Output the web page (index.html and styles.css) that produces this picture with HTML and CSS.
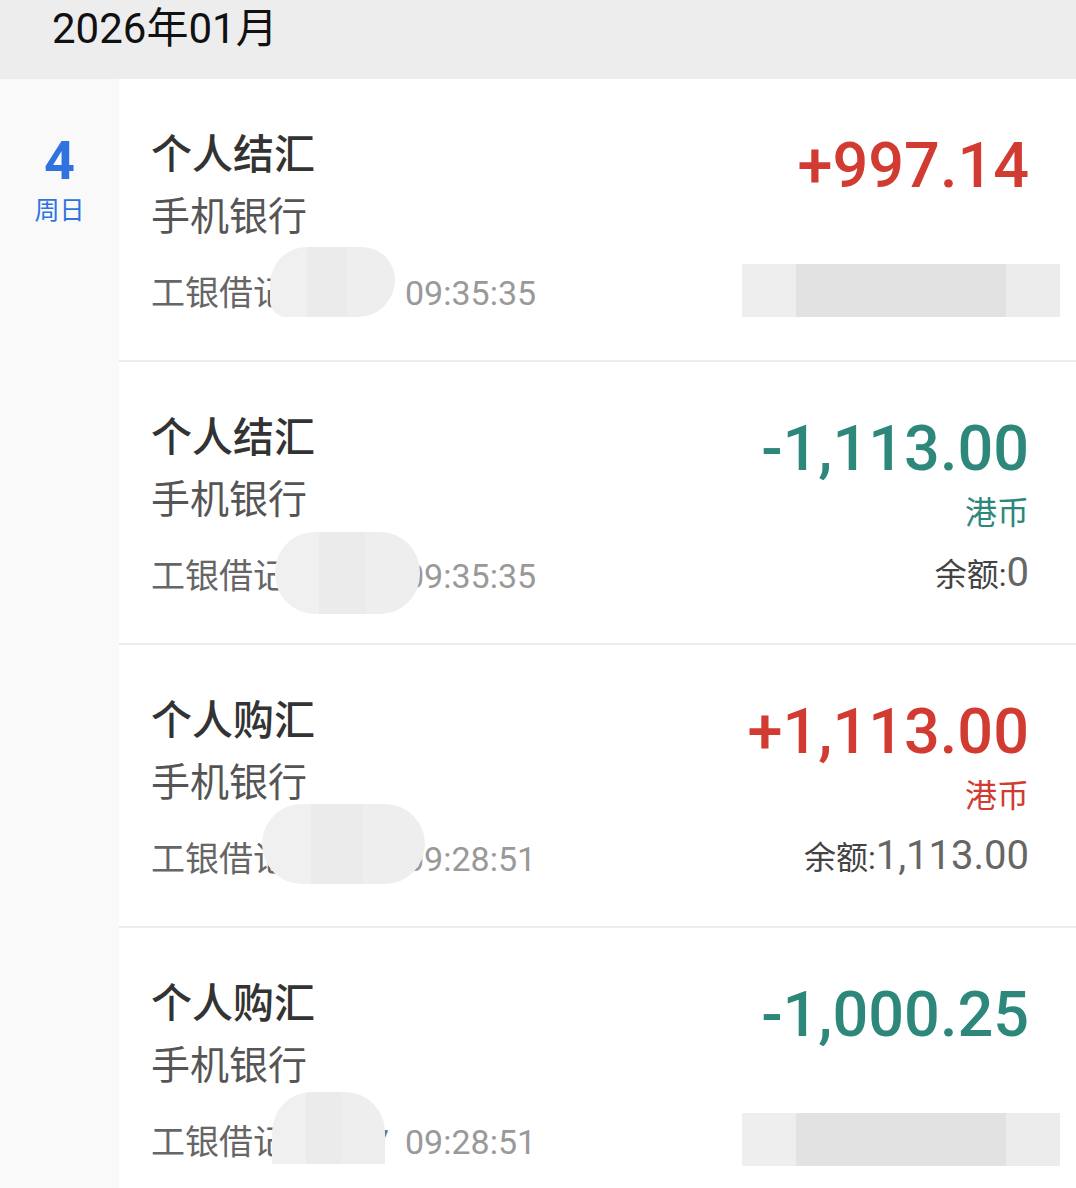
FILE: index.html
```html
<!DOCTYPE html>
<html lang="zh-CN">
<head>
<meta charset="UTF-8">
<title>交易明细</title>
<link rel="stylesheet" href="styles.css">
</head>
<body>

<div class="month">2026年01月</div>

<div class="day">
    <div class="date">
        <div class="date-num">4</div>
        <div class="date-week">周日</div>
    </div>

    <div class="list">
        <div class="item">
            <div class="info">
                <div class="title">个人结汇</div>
                <div class="channel">手机银行</div>
                <div class="meta"><span class="card">工银借记卡</span><span class="time">09:35:35</span></div>
            </div>
            <div class="money">
                <div class="amount in">+997.14</div>
            </div>
            <div class="mask mask-a"></div>
            <div class="mask mask-wide"></div>
        </div>

        <div class="item">
            <div class="info">
                <div class="title">个人结汇</div>
                <div class="channel">手机银行</div>
                <div class="meta"><span class="card">工银借记卡</span><span class="time">09:35:35</span></div>
            </div>
            <div class="money">
                <div class="amount out">-1,113.00</div>
                <div class="currency out">港币</div>
                <div class="balance">余额:<span class="balance-num">0</span></div>
            </div>
            <div class="mask mask-b"></div>
        </div>

        <div class="item">
            <div class="info">
                <div class="title">个人购汇</div>
                <div class="channel">手机银行</div>
                <div class="meta"><span class="card">工银借记卡</span><span class="time">09:28:51</span></div>
            </div>
            <div class="money">
                <div class="amount in">+1,113.00</div>
                <div class="currency in">港币</div>
                <div class="balance">余额:<span class="balance-num">1,113.00</span></div>
            </div>
            <div class="mask mask-c"></div>
        </div>

        <div class="item">
            <div class="info">
                <div class="title">个人购汇</div>
                <div class="channel">手机银行</div>
                <div class="meta"><span class="card">工银借记卡<span class="tail">7</span></span><span class="time">09:28:51</span></div>
            </div>
            <div class="money">
                <div class="amount out">-1,000.25</div>
            </div>
            <div class="mask mask-d"></div>
            <div class="mask mask-wide"></div>
        </div>
    </div>
</div>

</body>
</html>
```

FILE: styles.css
```css
body { margin: 0; font-family: Roboto, "Noto Sans CJK SC", sans-serif; background: #fff; color: #333; }

.month { height: 79px; background: #ededed; padding-left: 52px; font-size: 42px; line-height: 58px; color: #111; }

.day { display: flex; }
.date { width: 119px; flex-shrink: 0; background: #f9f9f9; text-align: center; color: #2f72e0; }
.date-num { padding-top: 52px; font-size: 54px; font-weight: bold; line-height: 60px; }
.date-week { font-size: 25px; line-height: 40px; }

.list { flex: 1; }
.item { position: relative; display: flex; justify-content: space-between; height: 281px; padding: 0 47px 0 32px; border-bottom: 2px solid #ececec; overflow: hidden; }

.info { padding-top: 39px; }
.title { font-size: 41px; line-height: 74px; font-weight: 500; color: #333; }
.channel { font-size: 39px; line-height: 50px; color: #555; }
.meta { margin-top: 26px; display: flex; font-size: 34px; line-height: 50px; }
.card { display: flex; justify-content: space-between; width: 254px; overflow: hidden; white-space: nowrap; color: #666; }
.tail { padding-right: 16px; color: #777; }
.time { color: #999; }

.money { padding-top: 47px; text-align: right; }
.amount { font-size: 63px; line-height: 80px; font-weight: 500; }
.currency { font-size: 32px; line-height: 48px; }
.in { color: #d13b31; }
.out { color: #2d877a; }
.balance { margin-top: 12px; font-size: 32px; line-height: 48px; color: #444; }
.balance-num { font-size: 40px; color: #666; }

/* redaction smudges */
.mask { position: absolute; background: linear-gradient(90deg, #f0f0f0 0 30%, #ebebeb 30% 62%, #eeeeee 62%); border-radius: 40px; }
.mask-a { left: 151px; top: 168px; width: 125px; height: 70px; border-radius: 45px 40px 45px 20px; }
.mask-b { left: 156px; top: 170px; width: 145px; height: 82px; }
.mask-c { left: 143px; top: 159px; width: 163px; height: 80px; }
.mask-d { left: 153px; top: 164px; width: 113px; height: 72px; border-radius: 40px 40px 0 0; }
.mask-wide { left: 623px; top: 185px; width: 318px; height: 53px; border-radius: 0; background: linear-gradient(90deg, #eeeeef 0 17%, #e2e2e2 17% 83%, #ececec 83%); }
```
